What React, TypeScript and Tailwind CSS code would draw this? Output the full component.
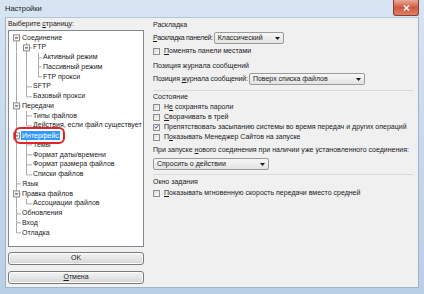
import React from "react";

type Row = { t: string; l: number; exp?: boolean; last?: boolean; anc: boolean[]; sel?: boolean };

const rows: Row[] = [
  { t: "Соединение", l: 0, exp: true, anc: [] },
  { t: "FTP", l: 1, exp: true, anc: [true] },
  { t: "Активный режим", l: 2, anc: [true, true] },
  { t: "Пассивный режим", l: 2, anc: [true, true] },
  { t: "FTP прокси", l: 2, last: true, anc: [true, true] },
  { t: "SFTP", l: 1, anc: [true] },
  { t: "Базовый прокси", l: 1, last: true, anc: [true] },
  { t: "Передачи", l: 0, exp: true, anc: [] },
  { t: "Типы файлов", l: 1, anc: [true] },
  { t: "Действия, если файл существует", l: 1, last: true, anc: [true] },
  { t: "Интерфейс", l: 0, exp: true, anc: [], sel: true },
  { t: "Темы", l: 1, anc: [true] },
  { t: "Формат даты/времени", l: 1, anc: [true] },
  { t: "Формат размера файлов", l: 1, anc: [true] },
  { t: "Списки файлов", l: 1, last: true, anc: [true] },
  { t: "Язык", l: 0, anc: [] },
  { t: "Правка файлов", l: 0, exp: true, anc: [] },
  { t: "Ассоциации файлов", l: 1, last: true, anc: [true] },
  { t: "Обновления", l: 0, anc: [] },
  { t: "Вход", l: 0, anc: [] },
  { t: "Отладка", l: 0, last: true, anc: [] },
];

const C = [7.5, 17.5, 29.5];
const T = [13, 24, 34];
const H = 9.75;
const LINE = "#a9a9a9";

function TreeRow({ r, first }: { r: Row; first: boolean }) {
  const w = T[r.l];
  const mid = H / 2;
  const c = C[r.l];
  return (
    <div className="flex items-center h-[9.75px] shrink-0">
      <svg width={w} height={H} className="shrink-0 block">
        {r.anc.map((on, i) =>
          on ? <line key={i} x1={C[i]} y1={0} x2={C[i]} y2={H} stroke={LINE} strokeWidth={1} /> : null
        )}
        {!first && <line x1={c} y1={0} x2={c} y2={mid} stroke={LINE} strokeWidth={1} />}
        {!r.last && <line x1={c} y1={mid} x2={c} y2={H} stroke={LINE} strokeWidth={1} />}
        <line x1={c} y1={mid} x2={w - 1} y2={mid} stroke={LINE} strokeWidth={1} />
        {r.exp && (
          <g>
            <rect x={c - 3} y={mid - 3} width={6} height={6} fill="#f4f4f4" stroke="#8c8c8c" strokeWidth={1} />
            <line x1={c - 1.5} y1={mid} x2={c + 1.5} y2={mid} stroke="#3a3a3a" strokeWidth={1} />
          </g>
        )}
      </svg>
      <span
        className={
          r.sel
            ? "bg-[#3399ff] text-white px-[1px] leading-[9px] ml-[-1px]"
            : "text-[#1a1a1a] whitespace-nowrap"
        }
      >
        {r.t}
      </span>
    </div>
  );
}

function Checkbox({ checked, children }: { checked?: boolean; children: React.ReactNode }) {
  return (
    <div className="flex items-center h-[10px] gap-[4px]">
      <div className="w-[7px] h-[7px] border border-[#8e8f8f] bg-gradient-to-br from-[#dcdcdc] to-[#fbfbfb] flex items-center justify-center shrink-0">
        {checked && (
          <svg width="6" height="6" viewBox="0 0 6 6" className="block">
            <path d="M0.8 3 L2.4 4.6 L5.2 1" fill="none" stroke="#3b4f86" strokeWidth="1.1" />
          </svg>
        )}
      </div>
      <span className="whitespace-nowrap">{children}</span>
    </div>
  );
}

function Select({ w, text }: { w: string; text: string }) {
  return (
    <div
      className={`${w} h-[12px] border border-[#9a9a9a] rounded-[2px] bg-gradient-to-b from-[#f6f6f6] to-[#e3e3e3] flex items-center justify-between pl-[3px] pr-[3px] shrink-0`}
    >
      <span className="whitespace-nowrap">{text}</span>
      <svg width="5" height="3" viewBox="0 0 5 3" className="block">
        <path d="M0 0 L5 0 L2.5 3 Z" fill="#1a1a1a" />
      </svg>
    </div>
  );
}

function Btn({ children }: { children: React.ReactNode }) {
  return (
    <div className="h-[13px] border border-[#7a7a7a] rounded-[3px] bg-gradient-to-b from-[#f3f3f3] via-[#e6e6e6] to-[#d4d4d4] flex items-center justify-center shadow-[inset_0_0_0_1px_#fbfbfb]">
      {children}
    </div>
  );
}

const U = ({ children }: { children: React.ReactNode }) => <span className="underline underline-offset-1">{children}</span>;

export default function App() {
  return (
    <div
      className="w-[424px] h-[294px] overflow-hidden flex flex-col bg-gradient-to-b from-[#d7e5f3] via-[#c6d8ec] to-[#b9cfe6] text-[7px] text-[#1a1a1a]"
      style={{ fontFamily: '"Liberation Sans", Arial, sans-serif' }}
    >
      {/* title bar */}
      <div className="h-[17px] shrink-0 flex items-start justify-between pl-[5px] pr-[5px]">
        <span className="text-[7.5px] leading-[17px] text-[#1b1b1b]">Настройки</span>
        <div className="w-[26px] h-[16px] rounded-b-[3px] border border-t-0 border-[#8d3b2a] bg-gradient-to-b from-[#e9a898] via-[#cf5a40] to-[#d9826a] flex items-center justify-center">
          <svg width="7" height="6" viewBox="0 0 7 6" className="block">
            <path d="M1 0.5 L6 5.5 M6 0.5 L1 5.5" stroke="#ffffff" strokeWidth="1.4" />
          </svg>
        </div>
      </div>

      {/* client */}
      <div className="flex-1 mx-[5px] mb-[6px] bg-[#f0f0f0] border border-[#9fb2c8] border-t-[#b5c5d8] flex min-h-0">
        {/* left column */}
        <div className="w-[138px] pl-[2px] shrink-0 flex flex-col">
          <div className="h-[12px] pt-[1px] leading-[10px]">
            Выберите <U>с</U>траницу:
          </div>
          <div className="relative h-[217px] bg-white border border-[#828790] flex flex-col pt-[2px] overflow-hidden">
            {rows.map((r, i) => (
              <TreeRow key={i} r={r} first={i === 0} />
            ))}
            <div className="absolute left-[5px] top-[95.5px] w-[51px] h-[17px] rounded-[6px] border-[2.5px] border-[#e3232c]" />
          </div>
          <div className="mt-[5px] flex flex-col gap-[6px]">
            <Btn>OK</Btn>
            <Btn>
              <U>О</U>тмена
            </Btn>
          </div>
        </div>

        {/* right column */}
        <div className="flex-1 ml-[9px] mr-[3px] flex flex-col">
          <div className="h-[10px] mt-[2px] leading-[10px]">Раскладка</div>
          <div className="mt-[2px] flex items-center h-[12px] gap-[1px]">
            <span className="tracking-[-0.3px] whitespace-nowrap"><U>Р</U>аскладка панелей:</span>
            <Select w="w-[70px]" text="Классический" />
          </div>
          <div className="mt-[2px]">
            <Checkbox>
              <U>П</U>оменять панели местами
            </Checkbox>
          </div>
          <div className="h-[10px] mt-[5px] leading-[10px]">Позиция журнала сообщений</div>
          <div className="mt-[2px] flex items-center h-[12px] gap-[1px]">
            <span className="tracking-[-0.12px] whitespace-nowrap">
              Позиция <U>ж</U>урнала сообщений:
            </span>
            <Select w="w-[116px]" text="Поверх списка файлов" />
          </div>
          <div className="mt-[5px] h-px bg-[#dadada] mr-[2px]" />
          <div className="h-[10px] mt-[1px] leading-[10px]">Состояние</div>
          <div className="flex flex-col">
            <Checkbox>
              Н<U>е</U> сохранять пароли
            </Checkbox>
            <Checkbox>
              <U>С</U>ворачивать в трей
            </Checkbox>
            <Checkbox checked>Препятствовать засыпанию системы во время передач и других операций</Checkbox>
            <Checkbox>
              П<U>о</U>казывать Менеджер Сайтов на запуске
            </Checkbox>
          </div>
          <div className="h-[10px] mt-[3px] leading-[10px]">
            При запуске <U>н</U>ового соединения при наличии уже установленного соединения:
          </div>
          <div className="mt-[3px]">
            <Select w="w-[116px]" text="Спросить о действии" />
          </div>
          <div className="mt-[4px] h-px bg-[#dadada] mr-[2px]" />
          <div className="h-[10px] mt-[2px] leading-[10px]">Окно задания</div>
          <div className="mt-[1px]">
            <Checkbox>
              <U>П</U>оказывать мгновенную скорость передачи вместо средней
            </Checkbox>
          </div>
        </div>
      </div>
    </div>
  );
}
